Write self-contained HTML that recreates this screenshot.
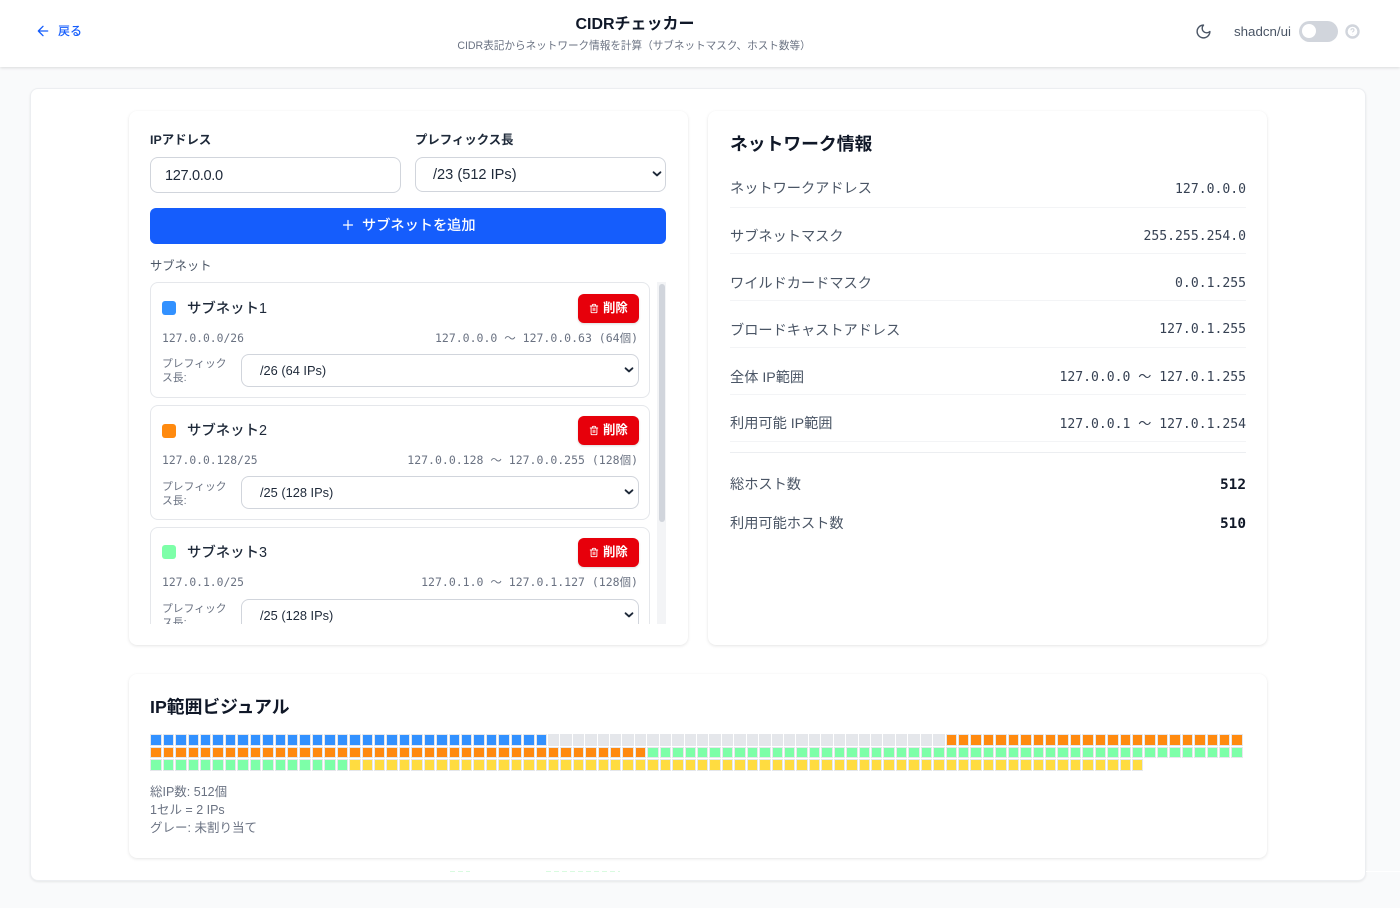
<!DOCTYPE html>
<html lang="ja"><head><meta charset="utf-8"><title>CIDRチェッカー</title>
<style>
*{box-sizing:border-box}
html,body{margin:0;padding:0;width:1400px;height:908px;overflow:hidden;background:#f9fafb;font-family:"Liberation Sans","Noto Sans CJK JP",sans-serif;color:#101828}
.a{position:absolute}
.t{position:absolute;white-space:nowrap;line-height:20px}
.m{font-family:"DejaVu Sans Mono","Noto Sans CJK JP",monospace}
.card{position:absolute;background:#fff;border-radius:8px;box-shadow:0 1px 3px rgba(0,0,0,.1),0 0 1px rgba(0,0,0,.03)}
.box{position:absolute;background:#fff;border:1px solid #d1d5dc;border-radius:8px}
.lab{font-size:14.2px;color:#4a5565}
.val{font-size:13.1px;color:#364153;right:154px}
.ln{position:absolute;left:730px;width:516px;height:1px;background:#f3f4f6}
.sub{position:absolute;left:150px;width:500px;height:116px;background:#fff;border:1px solid #e5e7eb;border-radius:8px}
.sw{position:absolute;left:11px;top:18px;width:14px;height:14px;border-radius:3px}
.nm{left:36px;top:16px;font-size:14.4px;font-weight:500;color:#1e2939}
.del{position:absolute;left:427px;top:11px;width:61px;height:29px;background:#e7000b;border-radius:6px;box-shadow:0 1px 2px rgba(0,0,0,.15)}
.del svg{position:absolute;left:11px;top:9px}
.del span{position:absolute;left:25px;top:4px;font-size:12.4px;line-height:20px;color:#fff;font-weight:700}
.cidr{left:11px;top:45px;font-size:11.35px;color:#6a7282}
.rng{right:11px;top:45px;font-size:11.5px;color:#6a7282}
.pl{position:absolute;left:11px;top:74px;width:70px;font-size:10.8px;line-height:14px;color:#6a7282}
.sel{position:absolute;left:90px;top:71px;width:398px;height:33px;background:#fff;border:1px solid #d1d5dc;border-radius:8px}
.sel span{position:absolute;left:18px;top:6px;font-size:12.8px;line-height:20px;color:#1e2939;white-space:nowrap}
.sel svg{position:absolute;right:3px;top:9px}
.s2 .del{top:10px}.s2 .cidr,.s2 .rng{top:44px}.s2 .nm{top:15px}
#g{position:absolute;left:150.3px;top:734px;width:1092.5px;display:grid;grid-template-columns:repeat(88,1fr);gap:1px}
#g i{display:block;height:11.5px;border:1px solid #e5e7eb}
.b{background:#3291ff}.n{background:#e5e7eb}.o{background:#ff8a0f}.e{background:#7dffa8}.y{background:#ffdc40}
</style></head><body>

<!-- header -->
<div class="a" style="left:0;top:0;width:1400px;height:67px;background:#fff;box-shadow:0 1px 3px rgba(0,0,0,.13)"></div>
<svg class="a" style="left:35px;top:23px" width="16" height="16" viewBox="0 0 24 24" fill="none" stroke="#155dfc" stroke-width="2" stroke-linecap="round" stroke-linejoin="round"><path d="M12 19l-7-7 7-7M19 12H5"/></svg>
<div class="t" style="left:58px;top:21px;font-size:12px;font-weight:500;color:#155dfc">戻る</div>
<div class="t" style="left:435px;width:400px;text-align:center;top:15px;font-size:16px;font-weight:700">CIDRチェッカー</div>
<div class="t" style="left:434px;width:400px;text-align:center;top:36px;font-size:10.6px;color:#6a7282">CIDR表記からネットワーク情報を計算（サブネットマスク、ホスト数等）</div>
<svg class="a" style="left:1195px;top:23px" width="17" height="17" viewBox="0 0 24 24" fill="none" stroke="#4a5565" stroke-width="2" stroke-linecap="round" stroke-linejoin="round"><path d="M12 3a6 6 0 0 0 9 9 9 9 0 1 1-9-9Z"/></svg>
<div class="t" style="left:1234px;top:22px;font-size:13.3px;color:#4a5565">shadcn/ui</div>
<div class="a" style="left:1299px;top:21px;width:39px;height:21px;border-radius:11px;background:#d1d5dc"></div>
<div class="a" style="left:1302px;top:24px;width:14px;height:14px;border-radius:50%;background:#fff"></div>
<svg class="a" style="left:1345px;top:24px" width="15" height="15" viewBox="0 0 15 15" fill="none"><circle cx="7.5" cy="7.5" r="6" stroke="#d1d5dc" stroke-width="2.4"/><path d="M6 6.2a1.5 1.5 0 0 1 3 0c0 1-1.5 1.2-1.5 2.2M7.5 10.3v.2" stroke="#d1d5dc" stroke-width="1.1"/></svg>

<!-- outer -->
<div class="a" style="left:30px;top:88px;width:1336px;height:793px;background:#fff;border:1px solid #eceef1;border-radius:8px;box-shadow:0 1px 2px rgba(0,0,0,.08)"></div>
<div class="a" style="left:1366px;top:871px;width:34px;height:1px;background:#fff"></div>
<div class="a" style="left:450px;top:871px;width:20px;height:1px;background:repeating-linear-gradient(90deg,#d9fbe0 0 5px,#fff 5px 8px)"></div>
<div class="a" style="left:546px;top:871px;width:74px;height:1px;background:repeating-linear-gradient(90deg,#d9fbe0 0 5px,#fff 5px 8px)"></div>

<!-- left card -->
<div class="card" style="left:129px;top:111px;width:559px;height:534px"></div>
<div class="t" style="left:150px;top:130px;font-size:12.4px;font-weight:700;color:#1e2939">IPアドレス</div>
<div class="t" style="left:415px;top:130px;font-size:12.4px;font-weight:700;color:#1e2939">プレフィックス長</div>
<div class="box" style="left:150px;top:157px;width:251px;height:36px"></div>
<div class="t" style="left:165px;top:166px;font-size:14.6px;letter-spacing:-.35px;color:#1e2939">127.0.0.0</div>
<div class="box" style="left:415px;top:157px;width:251px;height:35px"></div>
<div class="t" style="left:433px;top:165px;font-size:14.6px;color:#1e2939">/23 (512 IPs)</div>
<svg class="a" style="left:651px;top:168px" width="12" height="12" viewBox="0 0 14 14" fill="none" stroke="#1e2939" stroke-width="2.2" stroke-linecap="round" stroke-linejoin="round"><path d="M3 5l4 3.6L11 5"/></svg>
<div class="a" style="left:150px;top:208px;width:516px;height:36px;background:#155dfc;border-radius:6px"></div>
<svg class="a" style="left:341px;top:218px" width="14" height="14" viewBox="0 0 14 14" fill="none" stroke="#fff" stroke-width="1.2" stroke-linecap="round"><path d="M2.5 7h9M7 2.5v9"/></svg>
<div class="t" style="left:362px;top:216px;font-size:14.2px;font-weight:500;color:#fff">サブネットを追加</div>
<div class="t" style="left:150px;top:256px;font-size:12.3px;color:#4a5565">サブネット</div>

<div class="a" style="left:657px;top:282px;width:9px;height:342px;background:#f3f4f6"></div>
<div class="a" style="left:659px;top:284px;width:6px;height:238px;background:#d1d5dc;border-radius:3px"></div>

<div class="a" style="left:0;top:0;width:700px;height:624px;overflow:hidden">
<div class="sub" style="top:282px"><div class="sw" style="background:#3291ff"></div><div class="t nm">サブネット1</div>
<div class="del"><svg width="10" height="11" viewBox="0 0 24 24" fill="none" stroke="#fff" stroke-width="2.2" stroke-linecap="round"><path d="M3 6h18M19 6v14a2 2 0 0 1-2 2H7a2 2 0 0 1-2-2V6M8 6V4a2 2 0 0 1 2-2h4a2 2 0 0 1 2 2v2M10 11v6M14 11v6"/></svg><span>削除</span></div>
<div class="t m cidr">127.0.0.0/26</div><div class="t m rng">127.0.0.0 ～ 127.0.0.63 (64個)</div>
<div class="pl">プレフィック<br>ス長:</div>
<div class="sel"><span>/26 (64 IPs)</span><svg width="12" height="12" viewBox="0 0 14 14" fill="none" stroke="#1e2939" stroke-width="2.2" stroke-linecap="round" stroke-linejoin="round"><path d="M3 5l4 3.6L11 5"/></svg></div></div>

<div class="sub s2" style="top:405px;height:115px"><div class="sw" style="background:#ff8a0f;top:18px"></div><div class="t nm">サブネット2</div>
<div class="del"><svg width="10" height="11" viewBox="0 0 24 24" fill="none" stroke="#fff" stroke-width="2.2" stroke-linecap="round"><path d="M3 6h18M19 6v14a2 2 0 0 1-2 2H7a2 2 0 0 1-2-2V6M8 6V4a2 2 0 0 1 2-2h4a2 2 0 0 1 2 2v2M10 11v6M14 11v6"/></svg><span>削除</span></div>
<div class="t m cidr">127.0.0.128/25</div><div class="t m rng">127.0.0.128 ～ 127.0.0.255 (128個)</div>
<div class="pl">プレフィック<br>ス長:</div>
<div class="sel" style="top:70px"><span>/25 (128 IPs)</span><svg width="12" height="12" viewBox="0 0 14 14" fill="none" stroke="#1e2939" stroke-width="2.2" stroke-linecap="round" stroke-linejoin="round"><path d="M3 5l4 3.6L11 5"/></svg></div></div>

<div class="sub s2" style="top:527px"><div class="sw" style="background:#7dffa8;top:17px"></div><div class="t nm">サブネット3</div>
<div class="del"><svg width="10" height="11" viewBox="0 0 24 24" fill="none" stroke="#fff" stroke-width="2.2" stroke-linecap="round"><path d="M3 6h18M19 6v14a2 2 0 0 1-2 2H7a2 2 0 0 1-2-2V6M8 6V4a2 2 0 0 1 2-2h4a2 2 0 0 1 2 2v2M10 11v6M14 11v6"/></svg><span>削除</span></div>
<div class="t m cidr">127.0.1.0/25</div><div class="t m rng">127.0.1.0 ～ 127.0.1.127 (128個)</div>
<div class="pl">プレフィック<br>ス長:</div>
<div class="sel" style="top:71px"><span>/25 (128 IPs)</span><svg width="12" height="12" viewBox="0 0 14 14" fill="none" stroke="#1e2939" stroke-width="2.2" stroke-linecap="round" stroke-linejoin="round"><path d="M3 5l4 3.6L11 5"/></svg></div></div>
</div>

<!-- right card -->
<div class="card" style="left:708px;top:111px;width:559px;height:534px"></div>
<div class="t" style="left:730px;top:134px;font-size:17.8px;font-weight:700">ネットワーク情報</div>
<div class="t lab" style="left:730px;top:179px">ネットワークアドレス</div><div class="t m val" style="top:180px">127.0.0.0</div><div class="ln" style="top:207px"></div>
<div class="t lab" style="left:730px;top:227px">サブネットマスク</div><div class="t m val" style="top:227px">255.255.254.0</div><div class="ln" style="top:253px"></div>
<div class="t lab" style="left:730px;top:274px">ワイルドカードマスク</div><div class="t m val" style="top:274px">0.0.1.255</div><div class="ln" style="top:300px"></div>
<div class="t lab" style="left:730px;top:321px">ブロードキャストアドレス</div><div class="t m val" style="top:320px">127.0.1.255</div><div class="ln" style="top:347px"></div>
<div class="t lab" style="left:730px;top:368px">全体 IP範囲</div><div class="t m val" style="top:368px">127.0.0.0 ～ 127.0.1.255</div><div class="ln" style="top:394px"></div>
<div class="t lab" style="left:730px;top:414px">利用可能 IP範囲</div><div class="t m val" style="top:415px">127.0.0.1 ～ 127.0.1.254</div><div class="ln" style="top:441px"></div>
<div class="ln" style="top:452px;background:#eceef1"></div>
<div class="t lab" style="left:730px;top:475px">総ホスト数</div><div class="t m" style="right:154px;top:475px;font-size:14.4px;font-weight:700">512</div>
<div class="t lab" style="left:730px;top:514px">利用可能ホスト数</div><div class="t m" style="right:154px;top:514px;font-size:14.4px;font-weight:700">510</div>

<!-- visual card -->
<div class="card" style="left:129px;top:674px;width:1138px;height:184px"></div>
<div class="t" style="left:150px;top:697px;font-size:17.8px;font-weight:700">IP範囲ビジュアル</div>
<div id="g">
<i class="b"></i><i class="b"></i><i class="b"></i><i class="b"></i><i class="b"></i><i class="b"></i><i class="b"></i><i class="b"></i>
<i class="b"></i><i class="b"></i><i class="b"></i><i class="b"></i><i class="b"></i><i class="b"></i><i class="b"></i><i class="b"></i>
<i class="b"></i><i class="b"></i><i class="b"></i><i class="b"></i><i class="b"></i><i class="b"></i><i class="b"></i><i class="b"></i>
<i class="b"></i><i class="b"></i><i class="b"></i><i class="b"></i><i class="b"></i><i class="b"></i><i class="b"></i><i class="b"></i>
<i class="n"></i><i class="n"></i><i class="n"></i><i class="n"></i><i class="n"></i><i class="n"></i><i class="n"></i><i class="n"></i>
<i class="n"></i><i class="n"></i><i class="n"></i><i class="n"></i><i class="n"></i><i class="n"></i><i class="n"></i><i class="n"></i>
<i class="n"></i><i class="n"></i><i class="n"></i><i class="n"></i><i class="n"></i><i class="n"></i><i class="n"></i><i class="n"></i>
<i class="n"></i><i class="n"></i><i class="n"></i><i class="n"></i><i class="n"></i><i class="n"></i><i class="n"></i><i class="n"></i>
<i class="o"></i><i class="o"></i><i class="o"></i><i class="o"></i><i class="o"></i><i class="o"></i><i class="o"></i><i class="o"></i>
<i class="o"></i><i class="o"></i><i class="o"></i><i class="o"></i><i class="o"></i><i class="o"></i><i class="o"></i><i class="o"></i>
<i class="o"></i><i class="o"></i><i class="o"></i><i class="o"></i><i class="o"></i><i class="o"></i><i class="o"></i><i class="o"></i>
<i class="o"></i><i class="o"></i><i class="o"></i><i class="o"></i><i class="o"></i><i class="o"></i><i class="o"></i><i class="o"></i>
<i class="o"></i><i class="o"></i><i class="o"></i><i class="o"></i><i class="o"></i><i class="o"></i><i class="o"></i><i class="o"></i>
<i class="o"></i><i class="o"></i><i class="o"></i><i class="o"></i><i class="o"></i><i class="o"></i><i class="o"></i><i class="o"></i>
<i class="o"></i><i class="o"></i><i class="o"></i><i class="o"></i><i class="o"></i><i class="o"></i><i class="o"></i><i class="o"></i>
<i class="o"></i><i class="o"></i><i class="o"></i><i class="o"></i><i class="o"></i><i class="o"></i><i class="o"></i><i class="o"></i>
<i class="e"></i><i class="e"></i><i class="e"></i><i class="e"></i><i class="e"></i><i class="e"></i><i class="e"></i><i class="e"></i>
<i class="e"></i><i class="e"></i><i class="e"></i><i class="e"></i><i class="e"></i><i class="e"></i><i class="e"></i><i class="e"></i>
<i class="e"></i><i class="e"></i><i class="e"></i><i class="e"></i><i class="e"></i><i class="e"></i><i class="e"></i><i class="e"></i>
<i class="e"></i><i class="e"></i><i class="e"></i><i class="e"></i><i class="e"></i><i class="e"></i><i class="e"></i><i class="e"></i>
<i class="e"></i><i class="e"></i><i class="e"></i><i class="e"></i><i class="e"></i><i class="e"></i><i class="e"></i><i class="e"></i>
<i class="e"></i><i class="e"></i><i class="e"></i><i class="e"></i><i class="e"></i><i class="e"></i><i class="e"></i><i class="e"></i>
<i class="e"></i><i class="e"></i><i class="e"></i><i class="e"></i><i class="e"></i><i class="e"></i><i class="e"></i><i class="e"></i>
<i class="e"></i><i class="e"></i><i class="e"></i><i class="e"></i><i class="e"></i><i class="e"></i><i class="e"></i><i class="e"></i>
<i class="y"></i><i class="y"></i><i class="y"></i><i class="y"></i><i class="y"></i><i class="y"></i><i class="y"></i><i class="y"></i>
<i class="y"></i><i class="y"></i><i class="y"></i><i class="y"></i><i class="y"></i><i class="y"></i><i class="y"></i><i class="y"></i>
<i class="y"></i><i class="y"></i><i class="y"></i><i class="y"></i><i class="y"></i><i class="y"></i><i class="y"></i><i class="y"></i>
<i class="y"></i><i class="y"></i><i class="y"></i><i class="y"></i><i class="y"></i><i class="y"></i><i class="y"></i><i class="y"></i>
<i class="y"></i><i class="y"></i><i class="y"></i><i class="y"></i><i class="y"></i><i class="y"></i><i class="y"></i><i class="y"></i>
<i class="y"></i><i class="y"></i><i class="y"></i><i class="y"></i><i class="y"></i><i class="y"></i><i class="y"></i><i class="y"></i>
<i class="y"></i><i class="y"></i><i class="y"></i><i class="y"></i><i class="y"></i><i class="y"></i><i class="y"></i><i class="y"></i>
<i class="y"></i><i class="y"></i><i class="y"></i><i class="y"></i><i class="y"></i><i class="y"></i><i class="y"></i><i class="y"></i>
</div>
<div class="t" style="left:150px;top:783px;font-size:12.5px;line-height:18px;color:#6a7282;white-space:normal;width:300px">総IP数: 512個<br>1セル = 2 IPs<br>グレー: 未割り当て</div>

</body></html>
